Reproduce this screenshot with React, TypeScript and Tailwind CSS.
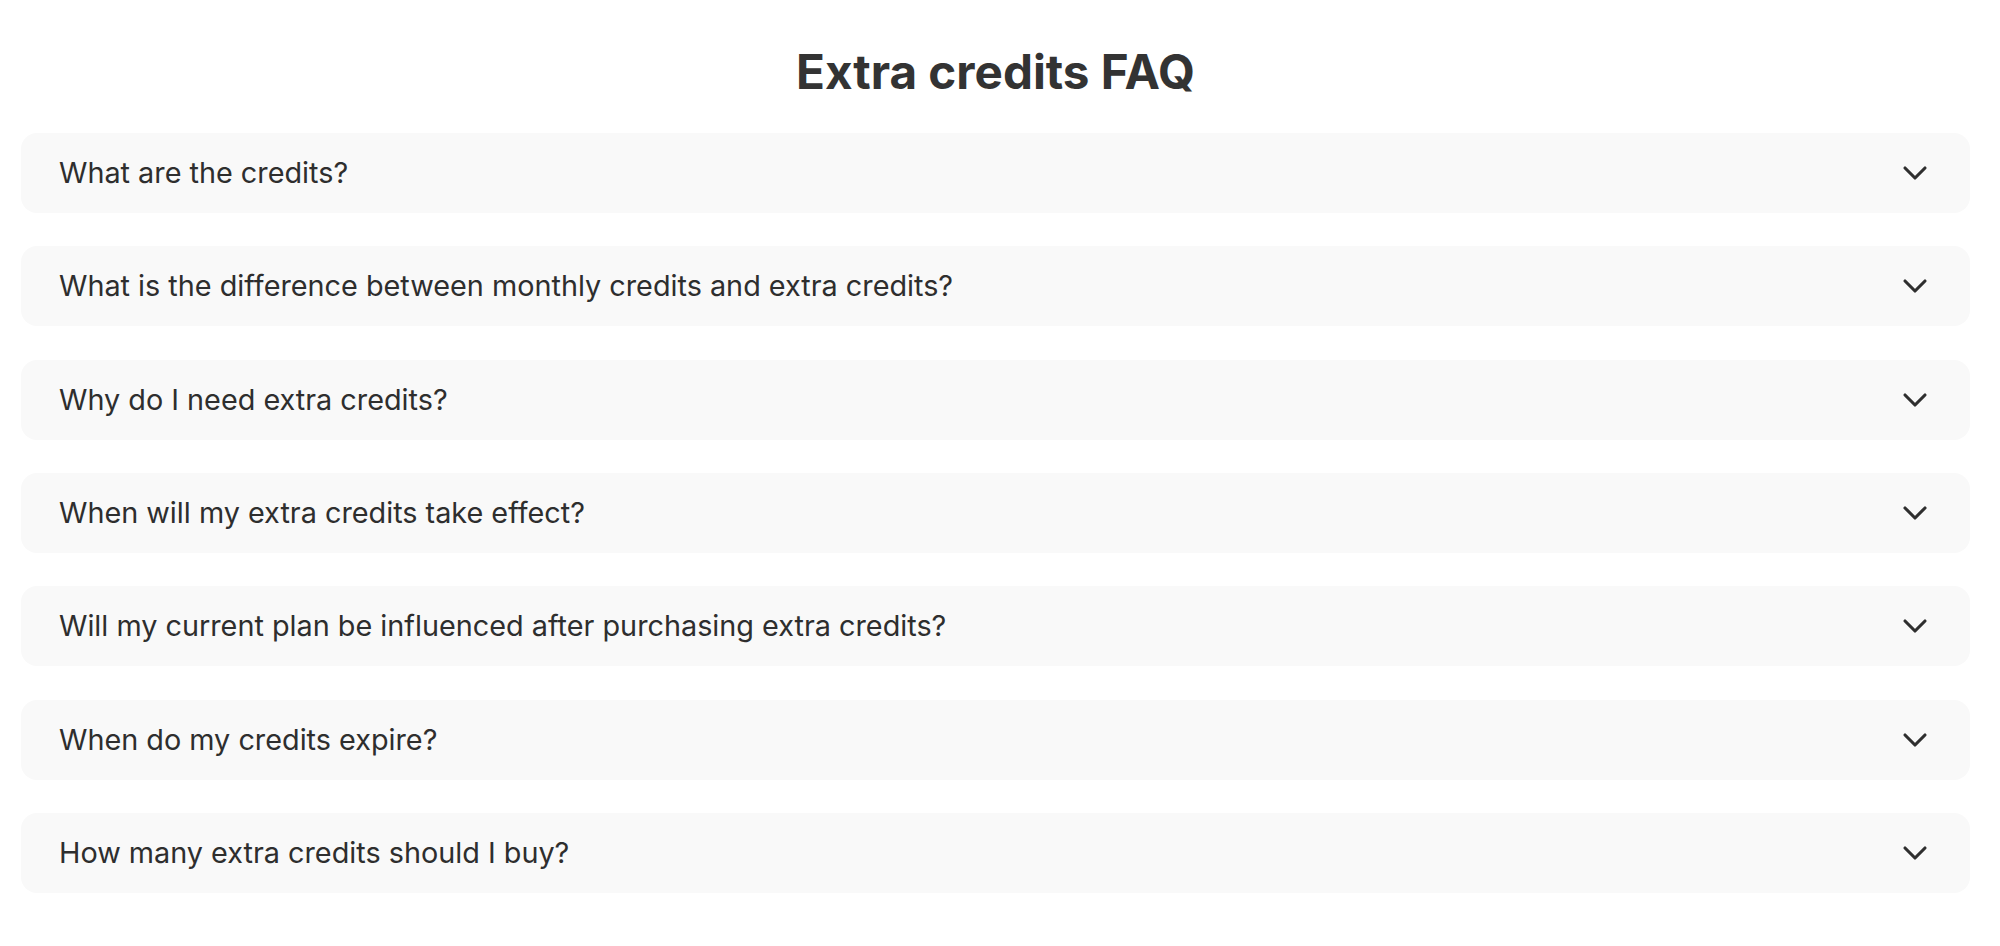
import React from "react";

const questions = [
  "What are the credits?",
  "What is the difference between monthly credits and extra credits?",
  "Why do I need extra credits?",
  "When will my extra credits take effect?",
  "Will my current plan be influenced after purchasing extra credits?",
  "When do my credits expire?",
  "How many extra credits should I buy?",
];

function Chevron() {
  return (
    <svg
      width="40"
      height="40"
      viewBox="0 0 24 24"
      fill="none"
      stroke="#2f2f2f"
      strokeWidth="1.9"
      strokeLinecap="round"
      strokeLinejoin="round"
    >
      <path d="m6 9 6 6 6-6" />
    </svg>
  );
}

export default function App() {
  return (
    <div
      className="min-h-[946px] w-[2000px] bg-white text-[#333333]"
      style={{ fontFamily: "Inter, 'Noto Sans', sans-serif" }}
    >
      <div className="ml-[21px] flex w-[1949px] flex-col">
        <h1 className="mt-[43px] text-center text-[47.6px] font-bold leading-[58px] text-[#333333]">
          Extra credits FAQ
        </h1>
        <div className="mt-[32px] flex flex-col gap-[33.33px]">
          {questions.map((q) => (
            <div
              key={q}
              className="flex h-[80px] items-center justify-between rounded-[16px] bg-[#f9f9f9] pl-[38px] pr-[35px]"
            >
              <span className="text-[28.8px] leading-[36px] text-[#2e2e2e]">{q}</span>
              <Chevron />
            </div>
          ))}
        </div>
      </div>
    </div>
  );
}
